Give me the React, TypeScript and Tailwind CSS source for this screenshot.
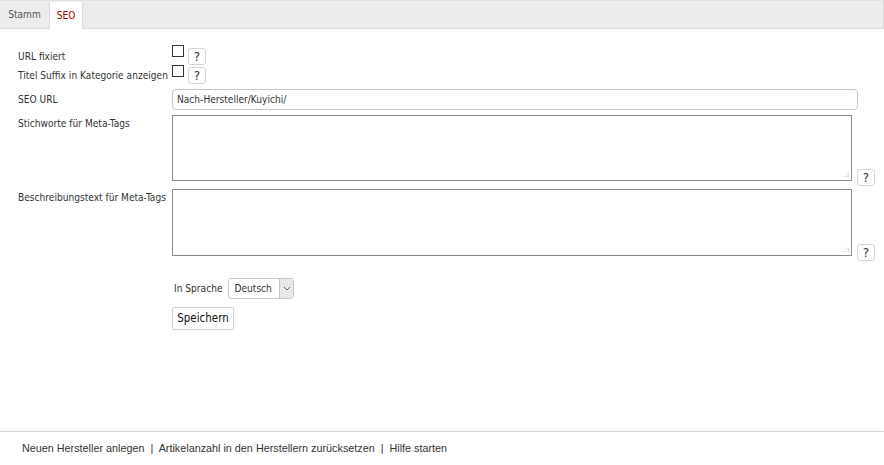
import React from "react";

function Help() {
  return (
    <span className="inline-flex h-[17px] w-[18px] items-center justify-center rounded-[3px] border border-[#d5d5d5] bg-white text-[12px] font-normal leading-none text-[#333] [font-family:'DejaVu_Sans',sans-serif]">
      ?
    </span>
  );
}

function Check() {
  return <span className="inline-block h-[12px] w-[12px] border border-[#333] bg-white" />;
}

export default function App() {
  return (
    <div className="flex h-[465px] w-full flex-col bg-white text-[10.1px] text-[#333] [font-family:'DejaVu_Sans_Condensed','Liberation_Sans',sans-serif]">
      {/* Tabs */}
      <div className="flex h-[29px] items-end border-b border-[#dcdcdc] border-t border-t-[#e2e2e2] bg-[#ececec] border-r border-r-[#dcdcdc]">
        <div className="flex h-[27px] w-[49px] items-center justify-center text-[#555]">Stamm</div>
        <div className="mb-[-1px] flex h-[27px] w-[34px] items-center justify-center border-x border-[#dcdcdc] bg-white text-[#a40000]">SEO</div>
      </div>

      {/* Form */}
      <div className="flex flex-col pl-[18px] pt-[18px]">
        <div className="flex h-[19px] items-center">
          <div className="w-[154px]">URL fixiert</div>
          <div className="flex items-center gap-[4px]">
            <span className="-mt-[6px]"><Check /></span>
            <Help />
          </div>
        </div>
        <div className="flex h-[19px] items-center">
          <div className="w-[154px] whitespace-nowrap">Titel Suffix in Kategorie anzeigen</div>
          <div className="flex items-center gap-[4px]">
            <span className="-mt-[4px]"><Check /></span>
            <Help />
          </div>
        </div>
        <div className="mt-[4px] flex h-[21px] items-center">
          <div className="w-[154px]">SEO URL</div>
          <div className="flex h-[21px] w-[686px] items-center rounded-[4px] border border-[#c8c8c8] px-[4px] text-[#333]">
            Nach-Hersteller/Kuyichi/
          </div>
        </div>
        <div className="mt-[5px] flex">
          <div className="w-[154px] pt-[1px]">Stichworte für Meta-Tags</div>
          <div className="flex items-end gap-[5px]">
            <div className="relative h-[66px] w-[680px] border border-[#8a8a8a]">
              <span className="absolute bottom-[1px] right-[2px] text-[7px] leading-none text-[#aaa]">.:i</span>
            </div>
            <div className="mb-[-5px]"><Help /></div>
          </div>
        </div>
        <div className="mt-[8px] flex">
          <div className="w-[154px] whitespace-nowrap pt-[1px]">Beschreibungstext für Meta-Tags</div>
          <div className="flex items-end gap-[5px]">
            <div className="relative h-[67px] w-[680px] border border-[#8a8a8a]">
              <span className="absolute bottom-[1px] right-[2px] text-[7px] leading-none text-[#aaa]">.:i</span>
            </div>
            <div className="mb-[-5px]"><Help /></div>
          </div>
        </div>
        <div className="ml-[154px] mt-[22px] flex items-center gap-[6px]">
          <span className="pl-[2px]">In Sprache</span>
          <div className="flex h-[21px] items-stretch rounded-[3px] border border-[#c8c8c8]">
            <span className="flex w-[50px] items-center pl-[5px]">Deutsch</span>
            <span className="flex w-[14px] items-center justify-center border-l border-[#c8c8c8] bg-[#e8e8e8]">
              <svg width="8" height="5" viewBox="0 0 8 5"><path d="M1 1 L4 4 L7 1" fill="none" stroke="#666" strokeWidth="1" /></svg>
            </span>
          </div>
        </div>
        <div className="ml-[154px] mt-[8px]">
          <span className="inline-flex h-[23px] w-[62px] items-center justify-center rounded-[2px] border border-[#d0d0d0] bg-white text-[11.5px] text-[#111]">
            Speichern
          </span>
        </div>
      </div>

      <div className="flex-1" />

      {/* Footer */}
      <div className="h-[34px] whitespace-pre border-t border-[#d8d8d8] bg-white pl-[22px] pt-[8px] text-[10.8px] text-[#333] shadow-[0_-3px_4px_rgba(0,0,0,0.03)] [font-family:'Liberation_Sans',Arial,sans-serif]">
        {"Neuen Hersteller anlegen  |  Artikelanzahl in den Herstellern zurücksetzen  |  Hilfe starten"}
      </div>
    </div>
  );
}
